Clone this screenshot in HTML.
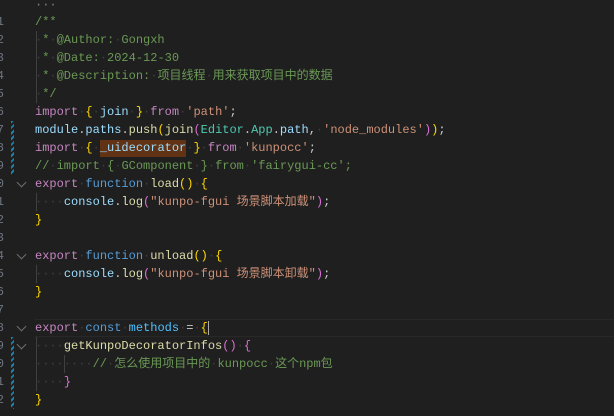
<!DOCTYPE html>
<html><head><meta charset="utf-8"><style>
body{margin:0;width:614px;height:416px;background:#1f1f1f;overflow:hidden;position:relative;font-family:"Liberation Mono","Noto Sans CJK SC",monospace;font-size:12px}
.l{position:absolute;left:35px;height:18px;line-height:18px;white-space:pre;color:#cccccc}
.n{position:absolute;left:-14px;width:18px;text-align:right;height:18px;line-height:18px;color:#6e7681;font-size:12px}
.c{color:#6a9955}.k{color:#c586c0}.b{color:#569cd6}.v{color:#9cdcfe}.f{color:#dcdcaa}.s{color:#ce9178}.t{color:#4ec9b0}.m{color:#4fc1ff}
.y{color:#ffd700}.p{color:#da70d6}.u{color:#179fff}.d{color:#3e3e3e}
.g{position:absolute;width:1px;background:#404040}
.mod{position:absolute;left:11px;width:3px;background:repeating-linear-gradient(135deg,#1b81a8 0 2px,#1f1f1f 2px 4px)}
.ch{position:absolute;left:18px;width:6px;height:6px;border-right:1px solid #6e6e6e;border-bottom:1px solid #6e6e6e;transform:rotate(45deg)}
</style></head><body>
<div style="position:absolute;left:35px;right:0;top:319px;height:16px;border-top:1px solid #282828;border-bottom:1px solid #282828"></div>
<div style="position:absolute;left:100px;top:140px;width:86px;height:17px;background:#613214"></div>
<div class="mod" style="top:121px;height:54px"></div>
<div class="mod" style="top:337px;height:72px"></div>
<div class="ch" style="top:179px"></div>
<div class="ch" style="top:251px"></div>
<div class="ch" style="top:323px"></div>
<div class="ch" style="top:341px"></div>
<div class="g" style="left:36px;top:31px;height:72px"></div>
<div class="g" style="left:36px;top:193px;height:18px"></div>
<div class="g" style="left:36px;top:265px;height:18px"></div>
<div class="g" style="left:36px;top:337px;height:54px"></div>
<div class="g" style="left:64px;top:355px;height:18px"></div>

<div class="l" style="top:-4px;color:#808080">···</div>
<div class="n" style="top:13px">1</div><div class="l c" style="top:13px">/**</div>
<div class="n" style="top:31px">2</div><div class="l c" style="top:31px"><span class="d">·</span>*<span class="d">·</span>@Author:<span class="d">·</span>Gongxh</div>
<div class="n" style="top:49px">3</div><div class="l c" style="top:49px"><span class="d">·</span>*<span class="d">·</span>@Date:<span class="d">·</span>2024-12-30</div>
<div class="n" style="top:67px">4</div><div class="l c" style="top:67px"><span class="d">·</span>*<span class="d">·</span>@Description:<span class="d">·</span>项目线程<span class="d">·</span>用来获取项目中的数据</div>
<div class="n" style="top:85px">5</div><div class="l c" style="top:85px"><span class="d">·</span>*/</div>
<div class="n" style="top:103px">6</div><div class="l" style="top:103px"><span class="k">import</span><span class="d">·</span><span class="y">{</span><span class="d">·</span><span class="v">join</span><span class="d">·</span><span class="y">}</span><span class="d">·</span><span class="k">from</span><span class="d">·</span><span class="s">'path'</span>;</div>
<div class="n" style="top:121px">7</div><div class="l" style="top:121px"><span class="v">module</span>.<span class="v">paths</span>.<span class="f">push</span><span class="y">(</span><span class="f">join</span><span class="p">(</span><span class="t">Editor</span>.<span class="t">App</span>.<span class="v">path</span>,<span class="d">·</span><span class="s">'node_modules'</span><span class="p">)</span><span class="y">)</span>;</div>
<div class="n" style="top:139px">8</div><div class="l" style="top:139px"><span class="k">import</span><span class="d">·</span><span class="y">{</span><span class="d">·</span><span class="v">_uidecorator</span><span class="d">·</span><span class="y">}</span><span class="d">·</span><span class="k">from</span><span class="d">·</span><span class="s">'kunpocc'</span>;</div>
<div class="n" style="top:157px">9</div><div class="l c" style="top:157px">//<span class="d">·</span>import<span class="d">·</span>{<span class="d">·</span>GComponent<span class="d">·</span>}<span class="d">·</span>from<span class="d">·</span>'fairygui-cc';</div>
<div class="n" style="top:175px">0</div><div class="l" style="top:175px"><span class="k">export</span><span class="d">·</span><span class="b">function</span><span class="d">·</span><span class="f">load</span><span class="y">()</span><span class="d">·</span><span class="y">{</span></div>
<div class="n" style="top:193px">1</div><div class="l" style="top:193px"><span class="d">····</span><span class="v">console</span>.<span class="f">log</span><span class="p">(</span><span class="s">"kunpo-fgui 场景脚本加载"</span><span class="p">)</span>;</div>
<div class="n" style="top:211px">2</div><div class="l" style="top:211px"><span class="y">}</span></div>
<div class="n" style="top:229px">3</div>
<div class="n" style="top:247px">4</div><div class="l" style="top:247px"><span class="k">export</span><span class="d">·</span><span class="b">function</span><span class="d">·</span><span class="f">unload</span><span class="y">()</span><span class="d">·</span><span class="y">{</span></div>
<div class="n" style="top:265px">5</div><div class="l" style="top:265px"><span class="d">····</span><span class="v">console</span>.<span class="f">log</span><span class="p">(</span><span class="s">"kunpo-fgui 场景脚本卸载"</span><span class="p">)</span>;</div>
<div class="n" style="top:283px">6</div><div class="l" style="top:283px"><span class="y">}</span></div>
<div class="n" style="top:301px">7</div>
<div class="n" style="top:319px">8</div><div class="l" style="top:319px"><span class="k">export</span><span class="d">·</span><span class="b">const</span><span class="d">·</span><span class="m">methods</span><span class="d">·</span>=<span class="d">·</span><span class="y">{</span><span style="border-left:1px solid #aeafad"></span></div>
<div class="n" style="top:337px">9</div><div class="l" style="top:337px"><span class="d">····</span><span class="f">getKunpoDecoratorInfos</span><span class="p">()</span><span class="d">·</span><span class="p">{</span></div>
<div class="n" style="top:355px">0</div><div class="l" style="top:355px"><span class="d">········</span><span class="c">//<span class="d">·</span>怎么使用项目中的<span class="d">·</span>kunpocc<span class="d">·</span>这个npm包</span></div>
<div class="n" style="top:373px">1</div><div class="l" style="top:373px"><span class="d">····</span><span class="p">}</span></div>
<div class="n" style="top:391px">2</div><div class="l" style="top:391px"><span class="y">}</span></div>
</body></html>
